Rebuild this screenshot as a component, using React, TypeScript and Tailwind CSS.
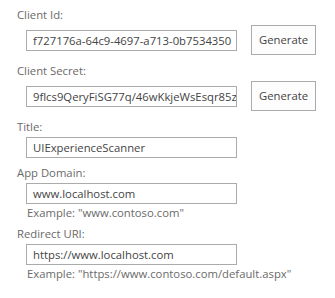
const font = { fontFamily: '"Segoe UI", "Open Sans", sans-serif' };

function Label({ text }: { text: string }) {
  return <div className="pl-[17px] text-[11.3px] leading-[16px] text-[#6a6a6a]">{text}</div>;
}

function Box({ value }: { value: string }) {
  return (
    <div className="ml-[26px] w-[211px] h-[21px] border border-[#ababab] bg-white px-[6px] text-[11.3px] leading-[19px] text-[#444] whitespace-nowrap overflow-hidden">
      {value}
    </div>
  );
}

function Example({ text }: { text: string }) {
  return <div className="pl-[27px] pt-[1px] text-[11.3px] leading-[16px] text-[#6a6a6a]">{text}</div>;
}

function GenRow({ value }: { value: string }) {
  return (
    <div className="flex items-center mt-[2px]">
      <Box value={value} />
      <button className="ml-[14px] w-[65px] h-[30px] border border-[#ababab] bg-[#fdfdfd] text-[11.3px] text-[#444]">
        Generate
      </button>
    </div>
  );
}

export default function App() {
  return (
    <div className="w-[335px] h-[298px] bg-white pt-[7px]" style={font}>
      <Label text="Client Id:" />
      <GenRow value="f727176a-64c9-4697-a713-0b7534350" />
      <div className="mt-[8px]">
        <Label text="Client Secret:" />
      </div>
      <GenRow value="9flcs9QeryFiSG77q/46wKkjeWsEsqr85z" />
      <div className="mt-[8px]">
        <Label text="Title:" />
      </div>
      <div className="mt-[2px]">
        <Box value="UIExperienceScanner" />
      </div>
      <div className="mt-[7px]">
        <Label text="App Domain:" />
      </div>
      <div className="mt-[2px]">
        <Box value="www.localhost.com" />
      </div>
      <Example text={'Example: "www.contoso.com"'} />
      <div className="mt-[5px]">
        <Label text="Redirect URI:" />
      </div>
      <div className="mt-[2px]">
        <Box value="https://www.localhost.com" />
      </div>
      <Example text={'Example: "https://www.contoso.com/default.aspx"'} />
    </div>
  );
}
